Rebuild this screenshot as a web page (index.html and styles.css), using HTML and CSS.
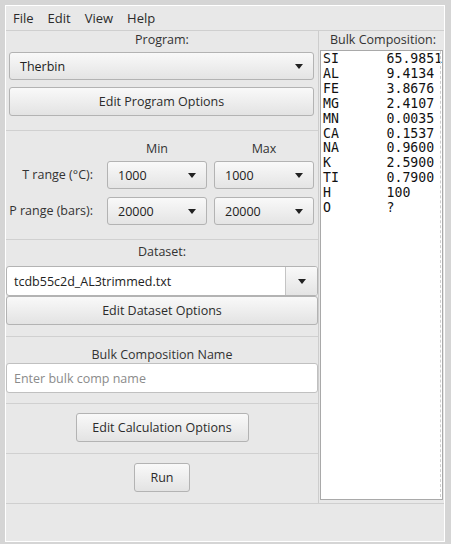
FILE: index.html
```html
<!DOCTYPE html>
<html>
<head>
<meta charset="utf-8">
<link rel="stylesheet" href="styles.css">
</head>
<body>
<div class="window">
  <div class="menubar">
    <span class="menu">File</span>
    <span class="menu">Edit</span>
    <span class="menu">View</span>
    <span class="menu">Help</span>
  </div>
  <div class="main">
    <div class="left">
      <section class="sec sec1">
        <div class="label">Program:</div>
        <div class="combo wide"><span>Therbin</span><i class="arrow"></i></div>
        <div class="btn wide gap7">Edit Program Options</div>
      </section>
      <section class="sec sec2">
        <div class="range-grid">
          <div></div>
          <div class="label">Min</div>
          <div class="label col3">Max</div>
          <div class="rlabel">T range (°C):</div>
          <div class="combo"><span>1000</span><i class="arrow"></i></div>
          <div class="combo col3"><span>1000</span><i class="arrow"></i></div>
          <div class="rlabel">P range (bars):</div>
          <div class="combo"><span>20000</span><i class="arrow"></i></div>
          <div class="combo col3"><span>20000</span><i class="arrow"></i></div>
        </div>
      </section>
      <section class="sec sec3">
        <div class="label">Dataset:</div>
        <div class="ecombo">
          <div class="efield">tcdb55c2d_AL3trimmed.txt</div>
          <div class="ebtn"><i class="arrow"></i></div>
        </div>
        <div class="btn full">Edit Dataset Options</div>
      </section>
      <section class="sec sec4">
        <div class="label">Bulk Composition Name</div>
        <div class="field placeholder">Enter bulk comp name</div>
      </section>
      <section class="sec sec5">
        <div class="btn calc">Edit Calculation Options</div>
      </section>
      <section class="sec sec6">
        <div class="btn run">Run</div>
      </section>
    </div>
    <div class="right">
      <div class="label">Bulk Composition:</div>
      <div class="textarea"><pre class="mono">SI	65.9851
AL	9.4134
FE	3.8676
MG	2.4107
MN	0.0035
CA	0.1537
NA	0.9600
K	2.5900
TI	0.7900
H	100
O	?</pre></div>
    </div>
  </div>
</div>
</body>
</html>
```

FILE: styles.css
```css
html, body {
  margin: 0;
  padding: 0;
}
body {
  background: #d5d5d5;
  width: 451px;
  height: 544px;
  overflow: hidden;
  font-family: "Open Sans", "Noto Sans", sans-serif;
  font-size: 12px;
  color: #333333;
}
.window {
  margin: 5px 0 0 5px;
  width: 438px;
  height: 535px;
  border: 1px solid #ffffff;
  background: #e8e8e8;
  display: flex;
  flex-direction: column;
}
.menubar {
  height: 24px;
  border-bottom: 1px solid #cfcfcf;
  display: flex;
  align-items: center;
  padding-left: 1px;
}
.menu {
  padding: 0 6px;
  margin-right: 2px;
  font-size: 13px;
  line-height: 18px;
  color: #2b2b2b;
}
.main {
  display: flex;
  height: 472px;
  border-bottom: 1px solid #cfcfcf;
}
.left {
  width: 312px;
  border-right: 1px solid #cdcdcd;
  display: flex;
  flex-direction: column;
}
.sec {
  border-bottom: 1px solid #d0d0d0;
  display: flex;
  flex-direction: column;
  align-items: center;
}
.sec:last-child {
  border-bottom: none;
}
.label {
  line-height: 16px;
  height: 16px;
  text-align: center;
  font-size: 12.5px;
  white-space: nowrap;
}
.rlabel {
  line-height: 28px;
  text-align: right;
  font-size: 12.5px;
  white-space: nowrap;
  padding-right: 8px;
}
.sec1 { height: 98px; padding-top: 1px; }
.sec1 .combo { margin-top: 4px; }
.gap7 { margin-top: 7px; }
.wide { width: 305px; margin-left: 3px; align-self: flex-start; box-sizing: border-box; }
.combo {
  height: 28px;
  box-sizing: border-box;
  border: 1px solid #b3b3b3;
  border-radius: 3px;
  background: linear-gradient(#f9f9f9, #e4e4e4);
  display: flex;
  align-items: center;
  justify-content: space-between;
  padding: 0 10px 0 10px;
  font-size: 12.5px;
  color: #222;
}
.arrow {
  width: 0;
  height: 0;
  border-left: 4.5px solid transparent;
  border-right: 4.5px solid transparent;
  border-top: 5px solid #222;
}
.btn {
  height: 29px;
  box-sizing: border-box;
  border: 1px solid #b3b3b3;
  border-radius: 3px;
  background: linear-gradient(#f9f9f9, #e3e3e3);
  display: flex;
  align-items: center;
  justify-content: center;
  font-size: 12.5px;
  color: #2b2b2b;
  white-space: nowrap;
}
.sec2 { height: 98px; padding-top: 10px; }
.range-grid {
  display: grid;
  grid-template-columns: 95px 100px 101px;
  grid-template-rows: 20px 36px 28px;
  column-gap: 6px;
  align-self: flex-start;
}
.range-grid .combo { height: 28px; }
.range-grid .col3 { margin-left: 1px; }
.sec3 { height: 92px; padding-top: 4px; }
.sec3 .label { margin-bottom: 6px; }
.ecombo {
  width: 312px;
  height: 30px;
  box-sizing: border-box;
  display: flex;
  border: 1px solid #b3b3b3;
  border-radius: 3px;
  background: #ffffff;
  overflow: hidden;
}
.efield {
  flex: 1;
  display: flex;
  align-items: center;
  padding-left: 7px;
  font-size: 12.5px;
  color: #222;
  border-right: 1px solid #c4c4c4;
}
.ebtn {
  width: 31px;
  background: linear-gradient(#f9f9f9, #e4e4e4);
  display: flex;
  align-items: center;
  justify-content: center;
}
.full { width: 312px; }
.sec4 { height: 56px; padding-top: 10px; }
.field {
  width: 312px;
  height: 30px;
  box-sizing: border-box;
  border: 1px solid #c0c0c0;
  border-radius: 3px;
  background: #ffffff;
  display: flex;
  align-items: center;
  padding-left: 7px;
  font-size: 12.5px;
}
.placeholder { color: #8b8b8b; }
.sec5 { height: 40px; padding-top: 9px; }
.calc { width: 173px; }
.sec6 { height: 40px; padding-top: 9px; }
.run { width: 56px; }
.right {
  width: 125px;
  display: flex;
  flex-direction: column;
  padding-top: 1px;
}
.right .label { margin-left: 3px; margin-bottom: 2px; }
.textarea {
  margin-left: 1px;
  width: 123px;
  height: 450px;
  box-sizing: border-box;
  border: 1px solid #a9a9a9;
  background: #ffffff;
  position: relative;
}
.textarea::after {
  content: "";
  position: absolute;
  top: 0;
  bottom: 2px;
  right: 1px;
  border-right: 1px dashed #cfcfcf;
}
.mono {
  margin: 0;
  padding: 1px 0 0 2px;
  font-family: "DejaVu Sans Mono", monospace;
  font-size: 13.2px;
  line-height: 14.9px;
  tab-size: 8;
  color: #111;
  white-space: pre;
}
```
